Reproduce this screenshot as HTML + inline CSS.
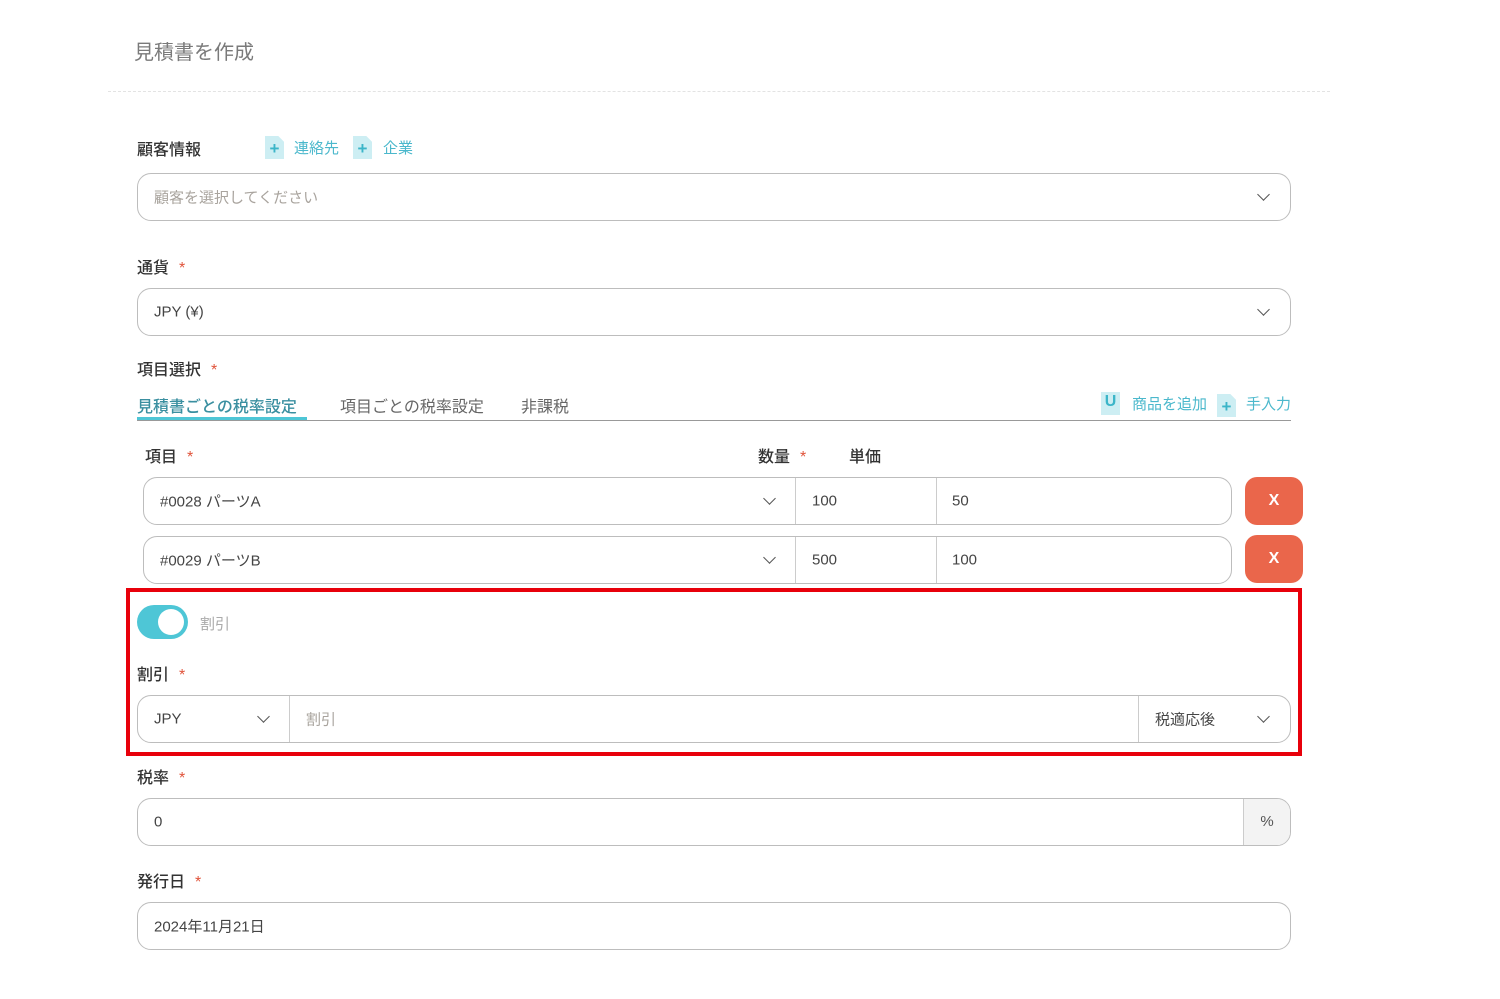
<!DOCTYPE html>
<html><head><meta charset="utf-8"><style>
*{box-sizing:border-box;margin:0;padding:0}
body{width:1500px;height:999px;background:#fff;position:relative;overflow:hidden;font-family:"Liberation Sans","Noto Sans CJK JP",sans-serif;color:#333}
.a{position:absolute;white-space:nowrap}
.lbl{font-size:16px;color:#333;font-weight:500}
.req{color:#e0533a;margin-left:10px;font-size:16px}
.box{position:absolute;border:1px solid #bdbdbd;border-radius:14px;background:#fff}
.txt{position:absolute;font-size:15px;color:#444;top:50%;transform:translateY(-50%)}
.ph{color:#a9a49e}
.chev{position:absolute;width:9px;height:9px;border-right:1.6px solid #555;border-bottom:1.6px solid #555;transform:rotate(45deg)}
.vd{position:absolute;top:0;bottom:0;width:1px;background:#ccc}
.ic{position:absolute;width:19px;height:23px;background:#cdeef3;color:#3bb5c8;font-weight:bold;font-size:17px;text-align:center;line-height:26px;clip-path:polygon(0 0,70% 0,100% 25%,100% 100%,0 100%)}
.link{color:#4bb8cc;font-size:15px}
.xb{position:absolute;width:58px;height:48px;background:#ea664b;border-radius:12px;color:#fff;font-weight:bold;font-size:16px;text-align:center;line-height:48px}
</style></head><body>
<div class="a" style="left:134px;top:36px;font-size:20px;color:#7a7a7a">見積書を作成</div>
<div class="a" style="left:108px;top:91px;width:1222px;border-top:1px dashed #e3e3e3"></div>

<div class="a lbl" style="left:137px;top:136px">顧客情報</div>
<div class="ic" style="left:265px;top:136px">+</div><div class="a link" style="left:294px;top:137px">連絡先</div>
<div class="ic" style="left:353px;top:136px">+</div><div class="a link" style="left:383px;top:137px">企業</div>
<div class="box" style="left:137px;top:173px;width:1154px;height:48px"><span class="txt ph" style="left:16px">顧客を選択してください</span><i class="chev" style="right:22px;top:16px"></i></div>

<div class="a lbl" style="left:137px;top:254px">通貨<span class="req">*</span></div>
<div class="box" style="left:137px;top:288px;width:1154px;height:48px"><span class="txt" style="left:16px">JPY (¥)</span><i class="chev" style="right:22px;top:16px"></i></div>

<div class="a lbl" style="left:137px;top:356px">項目選択<span class="req">*</span></div>
<div class="a" style="left:137px;top:393px;font-size:16px;color:#3a8fa0;font-weight:500">見積書ごとの税率設定</div>
<div class="a" style="left:340px;top:393px;font-size:16px;color:#666">項目ごとの税率設定</div>
<div class="a" style="left:521px;top:393px;font-size:16px;color:#666">非課税</div>
<div class="ic" style="left:1101px;top:392px;clip-path:none;line-height:20px;font-size:16px">U</div><div class="a link" style="left:1132px;top:393px">商品を追加</div>
<div class="ic" style="left:1217px;top:394px">+</div><div class="a link" style="left:1246px;top:393px">手入力</div>
<div class="a" style="left:137px;top:420px;width:1154px;border-top:1px solid #999"></div>
<div class="a" style="left:137px;top:417px;width:170px;border-top:3px solid #4ec6d6"></div>

<div class="a lbl" style="left:145px;top:443px">項目<span class="req">*</span></div>
<div class="a lbl" style="left:758px;top:443px">数量<span class="req">*</span></div>
<div class="a lbl" style="left:849px;top:443px">単価</div>

<div class="box" style="left:143px;top:477px;width:1089px;height:48px"><span class="txt" style="left:16px">#0028 パーツA</span><i class="chev" style="left:621px;top:16px"></i><div class="vd" style="left:651px"></div><span class="txt" style="left:668px">100</span><div class="vd" style="left:792px"></div><span class="txt" style="left:808px">50</span></div>
<div class="xb" style="left:1245px;top:477px">X</div>
<div class="box" style="left:143px;top:536px;width:1089px;height:48px"><span class="txt" style="left:16px">#0029 パーツB</span><i class="chev" style="left:621px;top:16px"></i><div class="vd" style="left:651px"></div><span class="txt" style="left:668px">500</span><div class="vd" style="left:792px"></div><span class="txt" style="left:808px">100</span></div>
<div class="xb" style="left:1245px;top:535px">X</div>

<div class="a" style="left:126px;top:588px;width:1176px;height:168px;border:4px solid #e8000b"></div>
<div class="a" style="left:137px;top:605px;width:51px;height:34px;border-radius:17px;background:#4ec6d6"><div style="position:absolute;right:4px;top:4px;width:26px;height:26px;border-radius:50%;background:#fff"></div></div>
<div class="a" style="left:200px;top:613px;font-size:15px;color:#aaa">割引</div>
<div class="a lbl" style="left:137px;top:661px">割引<span class="req">*</span></div>
<div class="box" style="left:137px;top:695px;width:1154px;height:48px"><span class="txt" style="left:16px">JPY</span><i class="chev" style="left:121px;top:16px"></i><div class="vd" style="left:151px"></div><span class="txt ph" style="left:168px">割引</span><div class="vd" style="left:1000px"></div><span class="txt" style="left:1017px">税適応後</span><i class="chev" style="right:22px;top:16px"></i></div>

<div class="a lbl" style="left:137px;top:764px">税率<span class="req">*</span></div>
<div class="box" style="left:137px;top:798px;width:1154px;height:48px;overflow:hidden"><span class="txt" style="left:16px">0</span><div style="position:absolute;right:0;top:0;bottom:0;width:47px;background:#f3f3f3;border-left:1px solid #ccc;text-align:center;line-height:46px;font-size:15px;color:#555">%</div></div>

<div class="a lbl" style="left:137px;top:868px">発行日<span class="req">*</span></div>
<div class="box" style="left:137px;top:902px;width:1154px;height:48px"><span class="txt" style="left:16px">2024年11月21日</span></div>
</body></html>
